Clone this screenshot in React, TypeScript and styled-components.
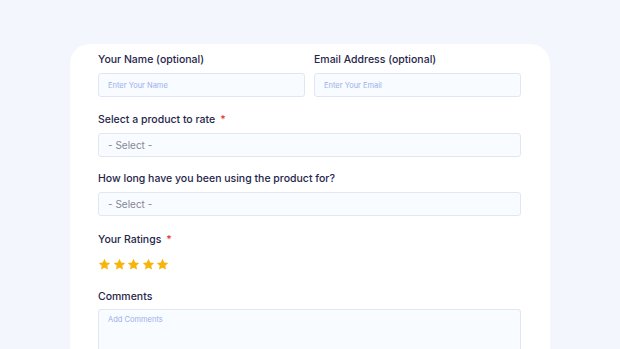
import React from "react";
import styled, { createGlobalStyle } from "styled-components";

const Global = createGlobalStyle`
  html, body { margin: 0; padding: 0; background: #f3f6fd; overflow: hidden; }
  body { font-family: "Inter", "Noto Sans", sans-serif; }
`;

const Page = styled.div`
  width: 620px;
  height: 349px;
  overflow: hidden;
  display: flex;
  justify-content: center;
`;

const Card = styled.form`
  margin-top: 44px;
  width: 480px;
  box-sizing: border-box;
  background: #ffffff;
  border-radius: 20px 20px 0 0;
  padding: 8px 29px 0 28px;
  display: flex;
  flex-direction: column;
`;

const Row = styled.div`
  display: grid;
  grid-template-columns: 1fr 1fr;
  column-gap: 9px;
`;

const Field = styled.div<{ $mt?: number }>`
  display: flex;
  flex-direction: column;
  margin-top: ${(p) => p.$mt ?? 0}px;
`;

const Label = styled.label<{ $gap?: number }>`
  font-size: 10.5px;
  line-height: 16px;
  font-weight: 500;
  color: #26264a;
  margin-bottom: ${(p) => p.$gap ?? 5}px;
`;

const Req = styled.span`
  color: #e5323b;
  margin-left: 5px;
`;

const Input = styled.div<{ $h?: number }>`
  height: ${(p) => p.$h ?? 24}px;
  box-sizing: border-box;
  border: 1px solid #e1e7f2;
  border-radius: 3px;
  background: #f8fbff;
  display: flex;
  align-items: center;
  padding: 0 9px;
`;

const Area = styled(Input)`
  align-items: flex-start;
  padding-top: 5px;
  border-bottom: none;
  border-radius: 3px 3px 0 0;
`;

const Placeholder = styled.span`
  font-size: 7.5px;
  color: #9cb0ec;
`;

const SelectText = styled.span`
  font-size: 10px;
  color: #868993;
`;

const Stars = styled.div`
  display: flex;
  gap: 1.5px;
  margin-top: 10px;
`;

const Star = () => (
  <svg width="13" height="13" viewBox="0 0 24 24">
    <path
      d="M12 1.5l3.2 6.7 7.3.9-5.4 5 1.4 7.3L12 17.9l-6.5 3.5 1.4-7.3-5.4-5 7.3-.9z"
      fill="#f7b40b"
    />
  </svg>
);

export default function App() {
  return (
    <>
      <Global />
      <Page>
        <Card>
          <Row>
            <Field>
              <Label>Your Name (optional)</Label>
              <Input>
                <Placeholder>Enter Your Name</Placeholder>
              </Input>
            </Field>
            <Field>
              <Label>Email Address (optional)</Label>
              <Input>
                <Placeholder>Enter Your Email</Placeholder>
              </Input>
            </Field>
          </Row>
          <Field $mt={15}>
            <Label>
              Select a product to rate<Req>*</Req>
            </Label>
            <Input>
              <SelectText>- Select -</SelectText>
            </Input>
          </Field>
          <Field $mt={14}>
            <Label>How long have you been using the product for?</Label>
            <Input>
              <SelectText>- Select -</SelectText>
            </Input>
          </Field>
          <Field $mt={16}>
            <Label $gap={0}>
              Your Ratings<Req>*</Req>
            </Label>
            <Stars>
              <Star />
              <Star />
              <Star />
              <Star />
              <Star />
            </Stars>
          </Field>
          <Field $mt={18}>
            <Label $gap={4}>Comments</Label>
            <Area $h={60}>
              <Placeholder>Add Comments</Placeholder>
            </Area>
          </Field>
        </Card>
      </Page>
    </>
  );
}
